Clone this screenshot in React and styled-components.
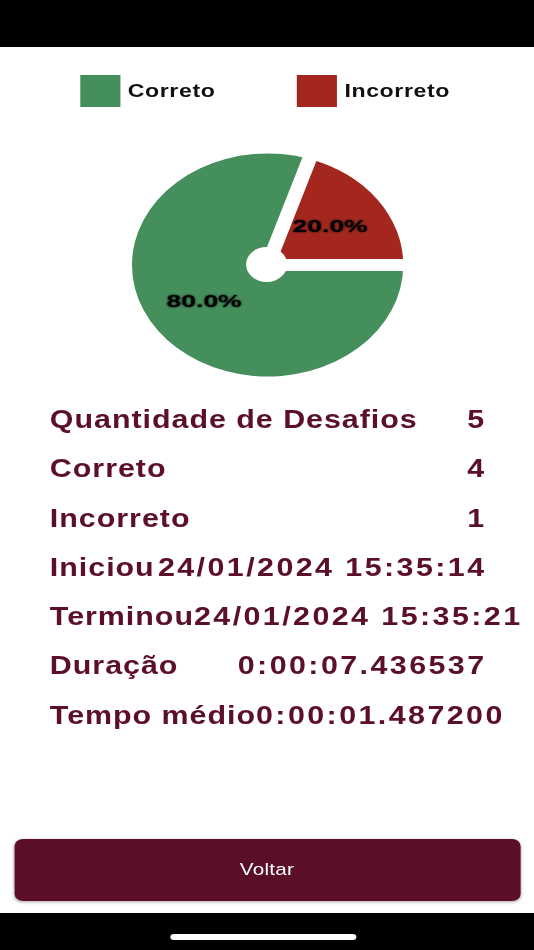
import React from "react";
import styled, { createGlobalStyle } from "styled-components";

/* The reference is an iOS screen stretched horizontally (circle → ellipse),
   so the screen is laid out at its natural width and widened by scaleX. */
const STRETCH = 534 / 439;

const Global = createGlobalStyle`
  html, body { margin: 0; padding: 0; background: #000; overflow: hidden; }
  body { font-family: "Liberation Sans", Arial, sans-serif; }
`;

const Screen = styled.div`
  width: 439px;
  height: 950px;
  display: flex;
  flex-direction: column;
  background: #000;
  transform: scaleX(${STRETCH});
  transform-origin: 0 0;
`;

const StatusBar = styled.div`
  height: 47px;
  flex: none;
  background: #000;
`;

const Content = styled.main`
  flex: 1;
  background: #fff;
  display: flex;
  flex-direction: column;
  padding-top: 28px;
  box-sizing: border-box;
`;

const Legend = styled.div`
  display: flex;
  justify-content: center;
  gap: 67px;
  padding-right: 3px;
`;

const LegendItem = styled.div`
  display: flex;
  align-items: center;
  gap: 6px;
`;

const Swatch = styled.span`
  width: 33px;
  height: 32px;
  background: ${(p) => p.$color};
  display: block;
`;

const LegendLabel = styled.span`
  font-size: 19px;
  font-weight: 700;
  letter-spacing: 0.5px;
  color: #111;
`;

const ChartWrap = styled.div`
  display: flex;
  justify-content: center;
  margin-top: 38px;
`;

const Stats = styled.div`
  margin-top: 10px;
  padding-left: 41px;
  width: 357.6px;
  display: flex;
  flex-direction: column;
`;

const Row = styled.div`
  display: flex;
  justify-content: space-between;
  white-space: nowrap;
  line-height: 49.3px;
  font-size: 25px;
  font-weight: 700;
  color: #5b0f2b;
`;

const Label = styled.span`
  flex: none;
  letter-spacing: 0.8px;
`;

const Value = styled.span`
  flex: none;
  letter-spacing: 2px;
  margin-right: -1.4px;
`;

const Spacer = styled.div`
  flex: 1;
`;

const Button = styled.button`
  margin: 0 11.5px 12px;
  height: 62px;
  border: none;
  border-radius: 7px;
  background: #5a0e2a;
  color: #fff;
  font-family: "Liberation Sans", Arial, sans-serif;
  font-size: 17px;
  letter-spacing: 0.2px;
  box-shadow: 0 1px 3px rgba(0, 0, 0, 0.35);
  cursor: pointer;
`;

const BottomBar = styled.div`
  height: 37px;
  flex: none;
  background: #000;
  display: flex;
  justify-content: center;
  align-items: flex-start;
  padding-right: 6px;
`;

const HomeIndicator = styled.div`
  margin-top: 21px;
  width: 153px;
  height: 6px;
  border-radius: 3px;
  background: #fff;
`;

const GREEN = "#458f5d";
const RED = "#a4271f";

function Pie() {
  const cx = 120, cy = 120, r = 111.5;
  const a = (72 * Math.PI) / 180;
  const px = cx + r * Math.cos(a);
  const py = cy - r * Math.sin(a);
  const ex = cx + (r + 10) * Math.cos(a);
  const ey = cy - (r + 10) * Math.sin(a);
  const label = {
    textAnchor: "middle",
    fontFamily: "Liberation Sans, Arial, sans-serif",
    fontWeight: 700,
    fontSize: 17,
    textLength: 61.7,
    lengthAdjust: "spacingAndGlyphs",
    fill: "#000",
    filter: "url(#sh)",
  };
  return (
    <svg width="240" height="240" viewBox="0 0 240 240">
      <defs>
        <filter id="sh" x="-20%" y="-40%" width="140%" height="180%">
          <feDropShadow dx="0" dy="0" stdDeviation="1.2" floodColor="#000" floodOpacity="0.9" />
        </filter>
      </defs>
      <path d={`M ${cx} ${cy} L ${px} ${py} A ${r} ${r} 0 1 0 ${cx + r} ${cy} Z`} fill={GREEN} />
      <path d={`M ${cx} ${cy} L ${cx + r} ${cy} A ${r} ${r} 0 0 0 ${px} ${py} Z`} fill={RED} />
      <line x1={cx} y1={cy} x2={cx + r + 10} y2={cy} stroke="#fff" strokeWidth="12" />
      <line x1={cx} y1={cy} x2={ex} y2={ey} stroke="#fff" strokeWidth="12" />
      <ellipse cx={cx - 0.8} cy={cy - 0.5} rx="16.9" ry="17.5" fill="#fff" />
      <text x="171.4" y="87" {...label}>20.0%</text>
      <text x="67.8" y="162" {...label}>80.0%</text>
    </svg>
  );
}

const rows = [
  ["Quantidade de Desafios", "5"],
  ["Correto", "4"],
  ["Incorreto", "1"],
  ["Iniciou", "24/01/2024 15:35:14"],
  ["Terminou", "24/01/2024 15:35:21"],
  ["Duração", "0:00:07.436537"],
  ["Tempo médio", "0:00:01.487200"],
];

export default function App() {
  return (
    <>
      <Global />
      <Screen>
        <StatusBar />
        <Content>
          <Legend>
            <LegendItem>
              <Swatch $color={GREEN} />
              <LegendLabel>Correto</LegendLabel>
            </LegendItem>
            <LegendItem>
              <Swatch $color={RED} />
              <LegendLabel>Incorreto</LegendLabel>
            </LegendItem>
          </Legend>
          <ChartWrap>
            <Pie />
          </ChartWrap>
          <Stats>
            {rows.map(([k, v]) => (
              <Row key={k}>
                <Label>{k}</Label>
                <Value>{v}</Value>
              </Row>
            ))}
          </Stats>
          <Spacer />
          <Button>Voltar</Button>
        </Content>
        <BottomBar>
          <HomeIndicator />
        </BottomBar>
      </Screen>
    </>
  );
}
